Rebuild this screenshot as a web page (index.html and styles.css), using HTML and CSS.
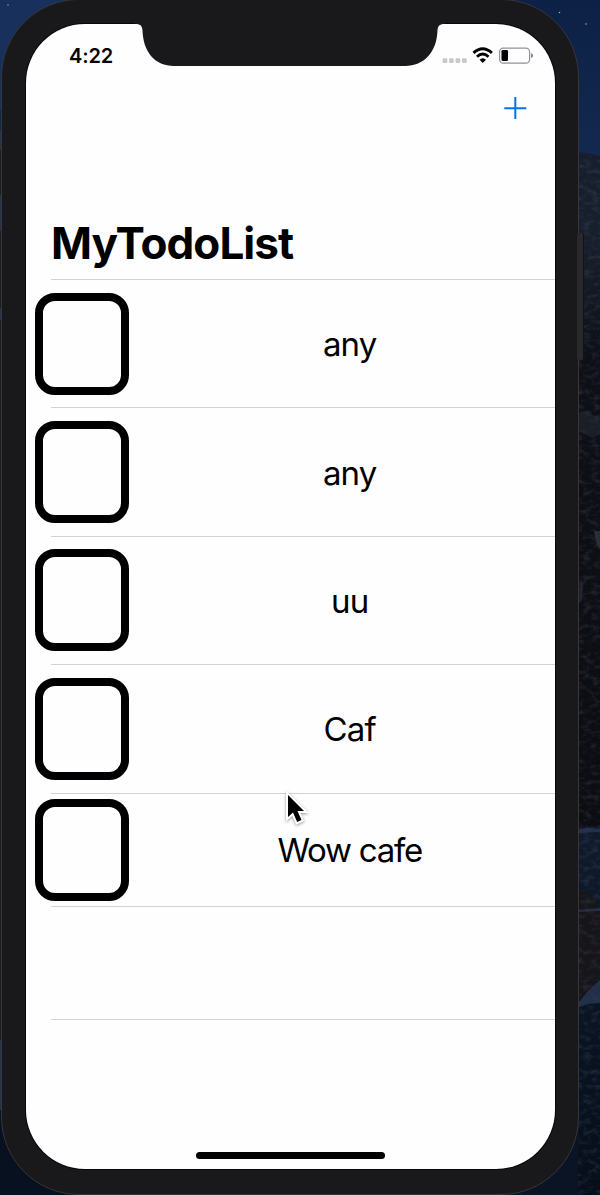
FILE: index.html
```html
<!DOCTYPE html>
<html lang="en">
<head>
<meta charset="utf-8">
<title>MyTodoList</title>
<link rel="stylesheet" href="styles.css">
</head>
<body>
<div class="desktop">
  <svg class="wallpaper" viewBox="0 0 600 1195" aria-hidden="true">
    <defs>
      <linearGradient id="sky" x1="0" y1="0" x2="0" y2="1"><stop offset="0" stop-color="#0c2145"/><stop offset="1" stop-color="#14294f"/></linearGradient>
      <linearGradient id="rock" x1="0" y1="0" x2="0" y2="1"><stop offset="0" stop-color="#161e2d"/><stop offset=".13" stop-color="#181f2c"/><stop offset=".3" stop-color="#0d1017"/><stop offset="1" stop-color="#0c0d12"/></linearGradient>
      <linearGradient id="sea" x1="0" y1="0" x2="0" y2="1"><stop offset="0" stop-color="#0f1a2c"/><stop offset=".5" stop-color="#0a1422"/><stop offset="1" stop-color="#060e1a"/></linearGradient>
      <filter id="grain" x="0" y="0" width="1" height="1"><feTurbulence type="fractalNoise" baseFrequency=".12 .2" numOctaves="4" seed="8"/><feColorMatrix values="0 0 0 0 .25  0 0 0 0 .3  0 0 0 0 .4  1.8 0 0 0 -.82"/></filter>
    </defs>
    <rect width="600" height="160" fill="url(#sky)"/>
    <rect width="100" height="110" fill="#17305c"/>
    <path d="M578 152L592 154L600 156V840H578Z" fill="url(#rock)"/>
    <path d="M578 828L600 827V1195H578Z" fill="url(#sea)"/>
    <path d="M578 888L588 892L596 900L600 908V978L590 992L578 999Z" fill="#15151a"/>
    <path d="M0 130H4V1100H0Z" fill="#1d1d21"/>
    <path d="M0 130H2V150H0ZM0 195H2V231H0ZM0 308H2V320H0ZM0 1040H2V1130H0Z" fill="#253247"/>
    <path d="M0 1110H80V1195H0Z" fill="#07111f"/>
    <rect x="578" y="156" width="22" height="1039" filter="url(#grain)" opacity=".22"/>
    <path d="M579 829L590 828L600 829V832L579 833ZM578 910L600 908V911L578 912ZM579 1002L588 991L600 980V1003L588 1004L579 1007Z" fill="#2b3b58" opacity=".7"/>
    <path d="M579 413L588 410L593 415L600 417V434L592 438L579 431Z" fill="#303743" opacity=".38"/>
    <path d="M594 531H600V548L597 545Z" fill="#444951" opacity=".5"/>
    <path d="M580 580L583 583L582 600L579 603ZM580 682L600 703M579 785L598 800" fill="#343b4b" stroke="#292c34" opacity=".5"/>
    <g fill="#9eabc2"><circle cx="559.500" cy="12.500" r=".8"/><circle cx="586" cy="24" r=".8"/><circle cx="8" cy="5" r=".7"/></g>
  </svg>
  <div class="side-button"></div>
  <main class="phone">
    <section class="screen">
      <header class="status">
        <span class="time">4:22</span>
        <svg class="indicators" viewBox="0 0 94 24" aria-label="Signal, Wi-Fi and battery">
          <g fill="#c9c8cb"><rect x="2.500" y="15.300" width="4.800" height="4.800" rx="1.400"/><rect x="9" y="15.300" width="4.800" height="4.800" rx="1.400"/><rect x="15.500" y="15.300" width="4.800" height="4.800" rx="1.400"/><rect x="22" y="15.300" width="4.800" height="4.800" rx="1.400"/></g>
          <g fill="none" stroke="#000" stroke-width="2.900"><path d="M33.500 9.900Q42.700 1.500 51.900 9.900"/><path d="M37 13.800Q42.700 8.400 48.500 13.800"/></g>
          <path d="M39.500 16.700Q42.700 13.700 46 16.700L42.700 20.100Z"/>
          <rect x="59.600" y="5.100" width="30" height="15" rx="3.700" fill="none" stroke="#929194" stroke-width="1.200"/>
          <rect x="61.500" y="7" width="6.500" height="11" rx="1.300"/>
          <path d="M91 10.200Q93 10.500 93 12.500Q93 14.600 91 15Z" fill="#88878b"/>
        </svg>
      </header>
      <nav class="toolbar">
        <svg class="add" viewBox="0 0 24 24" aria-label="Add"><path d="M12.300 1V23M1.300 12.200H23.300"/></svg>
      </nav>
      <h1 class="title"><span>MyTodoList</span></h1>
      <ul class="todos">
        <li class="todo"><span class="checkbox"></span><span class="label">any</span></li>
        <li class="todo"><span class="checkbox"></span><span class="label">any</span></li>
        <li class="todo"><span class="checkbox"></span><span class="label">uu</span></li>
        <li class="todo"><span class="checkbox"></span><span class="label">Caf</span></li>
        <li class="todo compact"><span class="checkbox"></span><span class="label wide">Wow cafe</span></li>
        <li class="todo compact"></li>
      </ul>
      <footer class="home"><div class="home-bar"></div></footer>
    </section>
    <svg class="notch" viewBox="0 0 304 43" aria-hidden="true"><path d="M0 0V1C5 1 7 2.500 7.500 7C8 29 20 43 39 43H270C289 43 302 29 302.500 7C303 2.500 305 1 310 1V0Z"/></svg>
  </main>
  <svg class="pointer" viewBox="0 0 24 36" aria-hidden="true"><path d="M3 3V25L8 20.500L12.200 30L16.500 28L12.500 19H19Z"/></svg>
</div>
</body>
</html>
```
FILE: styles.css
```css
* { box-sizing: border-box; }
body { margin: 0; font-family: Inter, "Liberation Sans", sans-serif; color: #000; }
.desktop { position: relative; width: 600px; height: 1195px; overflow: hidden; background: #0b1424; padding-left: 1px; }
.wallpaper { position: absolute; left: 0; top: 0; width: 600px; height: 1195px; }
.side-button { position: absolute; left: 577px; top: 233px; width: 7px; height: 127px; border-radius: 2px; background: #29292b; border-right: 1px solid #111; z-index: 1; }
.phone { position: relative; display: flex; width: 578px; height: 1196px; margin-top: -1px; padding: 24px 23.5px 25px 24px; border: 1px solid #37363a; border-radius: 78px; background: #19181a; }
.screen { flex: 1; display: flex; flex-direction: column; height: 1145px; background: #fefdff; border-radius: 59px; box-shadow: 0 0 0 1px #070708; overflow: hidden; }
.notch { position: absolute; left: 133px; top: 23px; width: 304px; height: 43px; fill: #19181a; overflow: visible; }
.status { height: 60px; display: flex; justify-content: space-between; align-items: flex-start; padding: 19px 21px 0 43px; }
.time { font-size: 20px; line-height: 26px; font-weight: 600; letter-spacing: -.1px; }
.indicators { width: 94px; height: 24px; }
.toolbar { height: 120px; display: flex; justify-content: flex-end; padding: 12px 28px 0 0; }
.add { width: 24px; height: 24px; fill: none; stroke: #0871e9; stroke-width: 2; }
.title { height: 75px; margin: 0; padding: 12px 0 0 25px; font-size: 44px; line-height: 54px; font-weight: 700; letter-spacing: -.95px; }
.todos { list-style: none; margin: 0; padding: 0; }
.todo { display: flex; align-items: center; height: 128.4px; padding: 1px 0 0 9px; background: linear-gradient(#d3d2d5, #d3d2d5) 25px 0 / 100% 1px no-repeat; }
.todo.compact { height: 113px; }
.todo:last-child { height: 114px; background: linear-gradient(#d3d2d5, #d3d2d5) 25px 0 / 100% 1px no-repeat, linear-gradient(#d3d2d5, #d3d2d5) 25px 100% / 100% 1px no-repeat; }
.checkbox { width: 94px; height: 102px; border: 8.5px solid #000; border-radius: 20px; }
.label { flex: 1; margin-left: 16px; padding-top: 1px; text-align: center; font-size: 33px; line-height: 40px; letter-spacing: -.8px; }
.label.wide { letter-spacing: -1.25px; }
.home { margin-top: auto; display: flex; justify-content: center; padding-bottom: 10px; }
.home-bar { width: 189px; height: 7px; border-radius: 4px; background: #000; }
.pointer { position: absolute; left: 285px; top: 792px; width: 24px; height: 36px; fill: #000; stroke: #fff; stroke-width: 4; paint-order: stroke; filter: drop-shadow(0 1px 1.5px rgba(0,0,0,.4)); }
```
